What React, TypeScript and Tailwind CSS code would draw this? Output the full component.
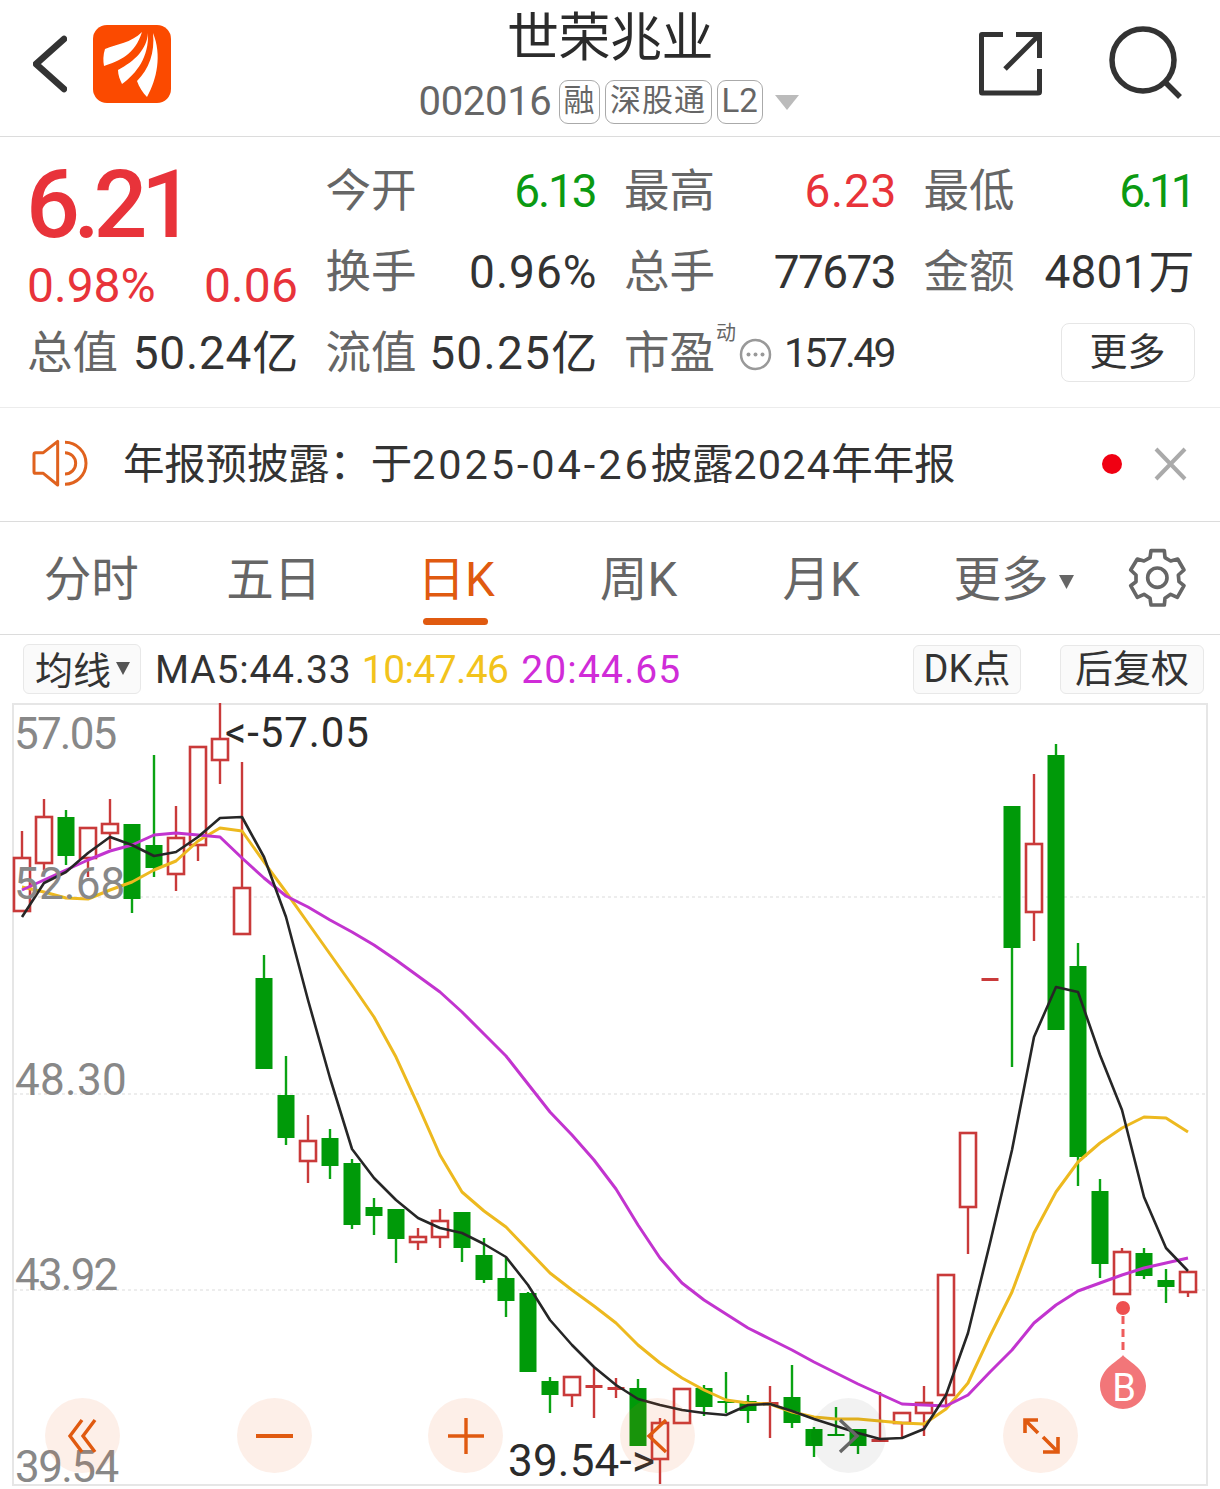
import React from "react";

type C = ["r" | "g", number, number, number, number];
// type, high, low, bodyTop, bodyBottom
const candles: C[] = [
  ["r", 831, 911, 858, 911], ["r", 799, 870, 817, 863], ["g", 810, 865, 817, 856], ["r", 827, 877, 828, 858],
  ["r", 799, 849, 824, 833], ["g", 824, 913, 824, 899], ["g", 755, 877, 845, 868], ["r", 806, 891, 838, 874],
  ["r", 747, 861, 747, 845], ["r", 703, 784, 739, 760], ["r", 762, 934, 888, 934], ["g", 955, 1069, 978, 1069],
  ["g", 1056, 1145, 1095, 1138], ["r", 1115, 1183, 1141, 1161], ["g", 1129, 1179, 1138, 1166], ["g", 1159, 1229, 1163, 1225],
  ["g", 1198, 1235, 1207, 1216], ["g", 1209, 1263, 1209, 1239], ["r", 1228, 1250, 1237, 1242], ["r", 1209, 1248, 1221, 1237],
  ["g", 1212, 1262, 1212, 1248], ["g", 1238, 1283, 1255, 1280], ["g", 1258, 1317, 1278, 1301], ["g", 1292, 1372, 1293, 1372],
  ["g", 1377, 1413, 1381, 1395], ["r", 1377, 1407, 1377, 1395], ["r", 1368, 1418, 1385, 1386], ["r", 1378, 1398, 1387, 1388],
  ["g", 1379, 1446, 1388, 1446], ["r", 1418, 1484, 1423, 1459], ["r", 1388, 1423, 1389, 1423], ["g", 1385, 1416, 1388, 1407],
  ["g", 1372, 1413, 1401, 1403], ["g", 1395, 1423, 1401, 1411], ["r", 1386, 1438, 1402, 1403], ["g", 1365, 1428, 1397, 1423],
  ["g", 1427, 1457, 1429, 1446], ["g", 1407, 1436, 1434, 1436], ["g", 1429, 1454, 1429, 1446], ["r", 1392, 1442, 1439, 1440],
  ["r", 1413, 1437, 1413, 1423], ["r", 1386, 1436, 1403, 1413], ["r", 1275, 1405, 1275, 1395], ["r", 1133, 1254, 1133, 1207],
  ["r", 978, 979, 978, 979], ["g", 806, 1067, 806, 948], ["r", 774, 941, 844, 912], ["g", 744, 1030, 755, 1030],
  ["g", 943, 1186, 966, 1157], ["g", 1179, 1278, 1191, 1264], ["r", 1248, 1294, 1252, 1294], ["g", 1248, 1279, 1253, 1276],
  ["g", 1269, 1303, 1280, 1287], ["r", 1272, 1297, 1272, 1292],
];

const ma5 = [917, 883, 872, 853, 837, 845, 856, 852, 837, 818, 817, 857, 917, 1000, 1078, 1149, 1178, 1200, 1218, 1228, 1233, 1244, 1257, 1285, 1320, 1345, 1367, 1385, 1399, 1405, 1410, 1413, 1415, 1405, 1404, 1411, 1419, 1426, 1433, 1439, 1438, 1429, 1395, 1333, 1243, 1150, 1037, 987, 992, 1055, 1110, 1197, 1248, 1271];
const ma10 = [887, 892, 898, 899, 890, 882, 870, 861, 841, 828, 831, 862, 892, 923, 954, 985, 1017, 1057, 1105, 1155, 1192, 1211, 1227, 1250, 1273, 1290, 1306, 1323, 1345, 1363, 1378, 1390, 1400, 1403, 1404, 1412, 1417, 1419, 1419, 1421, 1423, 1424, 1409, 1383, 1336, 1292, 1233, 1192, 1162, 1143, 1128, 1117, 1118, 1132];
const ma20 = [890, 880, 870, 860, 851, 845, 835, 833, 835, 837, 858, 878, 896, 907, 920, 932, 945, 960, 976, 992, 1012, 1034, 1056, 1084, 1112, 1135, 1160, 1189, 1225, 1258, 1283, 1300, 1314, 1328, 1339, 1350, 1362, 1373, 1384, 1394, 1404, 1405, 1406, 1395, 1372, 1350, 1323, 1305, 1291, 1283, 1275, 1268, 1263, 1258];

const pts = (a: number[]) => a.map((y, i) => `${22 + 22 * i},${y}`).join(" ");

function Candle({ c, i }: { c: C; i: number }) {
  const [t, h, l, top, bot] = c;
  const x = 22 + 22 * i;
  if (t === "g") {
    return (
      <g>
        <line x1={x} x2={x} y1={h} y2={l} stroke="#0aa313" strokeWidth="2.4" />
        <rect x={x - 8.5} y={top} width="17" height={Math.max(bot - top, 2)} fill="#009a09" />
      </g>
    );
  }
  const flat = bot - top < 3;
  return (
    <g>
      <line x1={x} x2={x} y1={h} y2={l} stroke="#c93a3a" strokeWidth="2.4" />
      {flat ? (
        <rect x={x - 8.5} y={top} width="17" height="3" fill="#c93a3a" />
      ) : (
        <rect x={x - 8} y={top} width="16" height={bot - top} fill="#fff" stroke="#c93a3a" strokeWidth="2.6" />
      )}
    </g>
  );
}

function Stat({ label, value, cls }: { label: string; value: string; cls: string }) {
  return (
    <div className="flex items-center justify-between whitespace-nowrap">
      <span className="mt-[3px] text-[45.5px] leading-none text-[#666]">{label}</span>
      <span className={`text-[46px] leading-none ${cls}`}>{value}</span>
    </div>
  );
}

function Axis({ children, top, left, cls }: { children: string; top: string; left: string; cls: string }) {
  return <span className={`absolute leading-none ${top} ${left} ${cls}`}>{children}</span>;
}

export default function App() {
  return (
    <div className="w-[1220px] h-[1489px] bg-white font-['Roboto','Noto_Sans_CJK_SC',sans-serif] overflow-hidden">
      {/* header */}
      <header className="relative h-[137px] border-b border-[#dcdcdc] flex flex-col items-center">
        <div className="absolute left-[33px] top-[25px] flex items-center">
          <svg width="34" height="78" viewBox="0 0 34 78">
            <path d="M31 14 L3 39 L31 64" fill="none" stroke="#333" strokeWidth="6.4" strokeLinecap="round" strokeLinejoin="round" />
          </svg>
          <svg width="78" height="78" viewBox="0 0 78 78" className="ml-[26px]">
            <rect width="78" height="78" rx="14" fill="#fb4a00" />
            <path d="M49 7 C38 18 24 19 12 24 C10 30 10 36 11 41 C26 36 42 30 49 7Z" fill="#fff" />
            <path d="M55 8 C54 24 42 36 25 45 C25 50 27 55 29 59 C44 48 56 32 55 8Z" fill="#fff" />
            <path d="M60 8 C62 28 56 44 44 56 C46 62 50 68 54 72 C64 54 69 30 60 8Z" fill="#fff" />
          </svg>
        </div>
        <div className="mt-[12px] text-[52px] leading-[54px] text-[#2b2b2b] tracking-[-0.5px]">世荣兆业</div>
        <div className="mt-[14px] ml-[-3px] flex items-center text-[#666]">
          <span className="text-[40px] leading-none tracking-[-0.3px]">002016</span>
          <span className="ml-[7px] h-[44px] w-[41px] rounded-[9px] border-[1.5px] border-[#aaa] text-[31px] leading-[40px] text-center">融</span>
          <span className="ml-[5px] h-[44px] w-[107px] rounded-[9px] border-[1.5px] border-[#aaa] text-[31px] leading-[40px] text-center tracking-[1px]">深股通</span>
          <span className="ml-[5px] h-[44px] w-[46px] rounded-[9px] border-[1.5px] border-[#aaa] text-[33px] leading-[40px] text-center">L2</span>
          <svg width="24" height="15" viewBox="0 0 24 15" className="ml-[12px]"><path d="M0 0H24L12 15Z" fill="#bbb" /></svg>
        </div>
        <svg className="absolute left-[977px] top-[30px]" width="68" height="68" viewBox="0 0 68 68" fill="none" stroke="#333" strokeWidth="5">
          <path d="M26 4.5 H5 Q4.5 4.5 4.5 5 V62 Q4.5 63 5 63 H61 Q62.5 63 62.5 62 V39" />
          <path d="M39 4.5 H62.5 V28" />
          <path d="M61 6 L28 39" />
        </svg>
        <svg className="absolute left-[1106px] top-[23px]" width="80" height="80" viewBox="0 0 80 80" fill="none" stroke="#333" strokeWidth="5.5">
          <circle cx="37" cy="37" r="31" />
          <path d="M59 59 L74 74" />
        </svg>
      </header>

      {/* stats */}
      <section className="h-[271px] border-b border-[#ececec] pl-[27px] pt-[13px] grid grid-cols-[269px_269px_270px_269px] grid-rows-[81px_81px_81px] gap-x-[29.5px]">
        <div className="row-span-2 flex flex-col">
          <div className="mt-[3px] ml-[-1px] text-[95px] leading-[104px] font-medium tracking-[-6.5px] text-[#e8333a]">6.21</div>
          <div className="mt-[5px] flex justify-between text-[48px] leading-none text-[#e8333a]">
            <span>0.98%</span>
            <span className="mr-[-2px] tracking-[0.1px]">0.06</span>
          </div>
        </div>
        <Stat label="今开" value="6.13" cls="mr-[-1px] text-[#0b9a12] tracking-[-2.1px]" />
        <Stat label="最高" value="6.23" cls="mr-[-3px] text-[#e8333a] tracking-[0.7px]" />
        <Stat label="最低" value="6.11" cls="text-[#0b9a12] tracking-[-4.1px]" />
        <Stat label="换手" value="0.96%" cls="mr-[-3px] text-[#333] tracking-[1px]" />
        <Stat label="总手" value="77673" cls="mr-[-1px] text-[#333] tracking-[-1.6px]" />
        <Stat label="金额" value="4801万" cls="mr-[-2px] text-[#333] tracking-[0.1px]" />
        <Stat label="总值" value="50.24亿" cls="mr-[-3px] text-[#333] tracking-[0.8px]" />
        <Stat label="流值" value="50.25亿" cls="mr-[-4px] text-[#333] tracking-[1.3px]" />
        <div className="flex items-center whitespace-nowrap">
          <span className="mt-[3px] text-[45.5px] leading-none text-[#666]">市盈</span>
          <div className="relative shrink-0 w-[57px] h-[46px]">
            <span className="absolute -top-[7px] left-[1px] text-[20px] leading-none text-[#666]">动</span>
            <svg className="absolute top-[8px] left-[24px]" width="33" height="33" viewBox="0 0 33 33">
              <circle cx="16.5" cy="16.5" r="14.5" fill="none" stroke="#999" strokeWidth="2.5" />
              <circle cx="9.5" cy="16.5" r="2" fill="#999" /><circle cx="16.5" cy="16.5" r="2" fill="#999" /><circle cx="23.5" cy="16.5" r="2" fill="#999" />
            </svg>
          </div>
          <span className="ml-[12px] mt-[2px] text-[41px] leading-none text-[#333] tracking-[-2.7px]">157.49</span>
        </div>
        <div className="flex items-center justify-end">
          <span className="w-[134px] h-[59px] -mr-[2px] rounded-[8px] border border-[#e6e6e6] text-[38px] leading-[57px] text-center text-[#333]">更多</span>
        </div>
      </section>

      {/* notice */}
      <section className="h-[114px] border-b border-[#dcdcdc] flex items-center relative">
        <svg className="ml-[20px]" width="80" height="70" viewBox="0 0 240 210" fill="none" stroke="#e0621e" strokeWidth="9" strokeLinejoin="round">
          <path d="M47 68 H70 L113 34 V165 L70 130 H47 Q42 130 42 125 V73 Q42 68 47 68Z" />
          <path d="M135 68 A32 32 0 0 1 135 132" />
          <path d="M135 37 A63 63 0 0 1 135 163" />
        </svg>
        <span className="ml-[23px] text-[41.5px] leading-none text-[#333] tracking-[-0.2px]">
          年报预披露：于<span className="tracking-[2.9px]">2025-04-26</span>披露<span className="tracking-[1.2px]">2024</span>年年报
        </span>
        <span className="absolute left-[1102px] top-[46px] w-[20px] h-[20px] rounded-full bg-[#f00012]" />
        <svg className="absolute left-[1154px] top-[39px]" width="33" height="34" viewBox="0 0 33 34" fill="none" stroke="#aaa" strokeWidth="4">
          <path d="M2 2 L31 32 M31 2 L2 32" />
        </svg>
      </section>

      {/* tabs */}
      <nav className="h-[113px] border-b border-[#dcdcdc] flex items-start relative text-[47.5px] leading-none text-[#666]">
        {["分时", "五日", "日K", "周K", "月K"].map((t, i) => (
          <div key={t} className="relative w-[182.5px] h-[112px] flex justify-center items-start pt-[35px]">
            <span className={i === 2 ? "text-[#e05a10]" : ""}>{t}</span>
            {i === 2 && <span className="absolute left-[58px] top-[96px] w-[65px] h-[7px] rounded-full bg-[#e05a10]" />}
          </div>
        ))}
        <div className="flex items-center pt-[35px] ml-[41px]">
          <span>更多</span>
          <svg className="ml-[10px] mt-[2px]" width="15" height="14" viewBox="0 0 15 14"><path d="M0 0H15L7.5 14Z" fill="#666" /></svg>
        </div>
        <svg className="absolute left-[1115px] top-[13px]" width="85" height="85" viewBox="0 0 255 255" fill="none" stroke="#666" strokeWidth="11" strokeLinejoin="round">
          <path d="M108 47 H148 L150 68 L167 78 L188 72 L207 105 L190 120 L192 140 L207 152 L187 187 L167 178 L150 190 L148 210 H108 L105 190 L87 178 L67 187 L47 152 L63 140 L63 120 L47 105 L67 72 L87 78 L105 68 Z" />
          <circle cx="127" cy="128" r="29" />
        </svg>
      </nav>

      {/* MA row */}
      <section className="h-[68px] flex items-center pl-[23px] pr-[16px]">
        <span className="h-[50px] w-[118px] rounded-[6px] border border-[#e8e8e8] bg-[#fafafa] flex items-center pl-[11px] pt-[3px] text-[38px] text-[#333] leading-none">
          均线
          <svg className="ml-[5px] -mt-[4px]" width="14" height="13" viewBox="0 0 14 13"><path d="M0 0H14L7 13Z" fill="#555" /></svg>
        </span>
        <div className="ml-[14px] pt-[3px] flex items-center text-[39px] leading-none">
          <span className="text-[#333] tracking-[0.8px]">MA5:44.33</span>
          <span className="ml-[10.5px] text-[#f2c31c] tracking-[-0.6px]">10:47.46</span>
          <span className="ml-[13px] text-[#d02cd8] tracking-[1.1px]">20:44.65</span>
        </div>
        <span className="ml-auto h-[49px] w-[108px] rounded-[6px] border border-[#e8e8e8] bg-[#fafafa] flex items-center justify-center text-[38px] text-[#333] leading-none">DK点</span>
        <span className="ml-[39px] h-[49px] w-[144px] rounded-[6px] border border-[#e8e8e8] bg-[#fafafa] flex items-center justify-center text-[38px] text-[#333] leading-none">后复权</span>
      </section>

      {/* chart */}
      <section className="relative mx-[12px] w-[1196px] h-[783px] border-2 border-[#e6e6e6]">
        <svg width="1192" height="779" viewBox="14 705 1192 779" className="block overflow-visible">
          {[897, 1094, 1290].map((y) => (
            <line key={y} x1="14" x2="1206" y1={y} y2={y} stroke="#e8e8e8" strokeWidth="1.5" strokeDasharray="3 3" />
          ))}
          {candles.map((c, i) => <Candle key={i} c={c} i={i} />)}
          <polyline points={pts(ma10)} fill="none" stroke="#edb91f" strokeWidth="3" strokeLinejoin="round" />
          <polyline points={pts(ma20)} fill="none" stroke="#c234cf" strokeWidth="3" strokeLinejoin="round" />
          <polyline points={pts(ma5)} fill="none" stroke="#262626" strokeWidth="2.6" strokeLinejoin="round" />
          {/* B marker */}
          <circle cx="1123" cy="1308" r="7" fill="#ee5050" />
          <line x1="1123" x2="1123" y1="1316" y2="1354" stroke="#ee5c5c" strokeWidth="3" strokeDasharray="8 5" />
          <path d="M1123 1355 C1127 1361 1146 1368 1146 1386 A23 23 0 1 1 1100 1386 C1100 1368 1119 1361 1123 1355Z" fill="#f27679" />
        </svg>
        <Axis top="top-[7px]" left="left-[0px]" cls="text-[44px] text-[#888] tracking-[-1.8px]">57.05</Axis>
        <Axis top="top-[157px]" left="left-[0px]" cls="text-[44px] text-[#888] tracking-[0.2px]">52.68</Axis>
        <Axis top="top-[353px]" left="left-[1px]" cls="text-[44px] text-[#888] tracking-[0.3px]">48.30</Axis>
        <Axis top="top-[548px]" left="left-[1px]" cls="text-[44px] text-[#888] tracking-[-1.8px]">43.92</Axis>
        <span className="absolute top-[742px] left-[1px] text-[44px] leading-[40px] text-[#888] tracking-[-1.6px]">39.54</span>
        <Axis top="top-[7px]" left="left-[211px]" cls="text-[42px] text-[#2b2b2b] tracking-[0.9px]">{"<-57.05"}</Axis>
        <Axis top="top-[734px]" left="left-[494px]" cls="text-[44px] text-[#2b2b2b] tracking-[0.2px]">{"39.54->"}</Axis>
        <span className="absolute left-[1098px] top-[664px] w-[24px] text-center text-[38px] leading-none text-white">B</span>

        {/* zoom controls */}
        <div className="absolute left-[31px] top-[693px] w-[75px] h-[75px] rounded-full bg-[#f0641e]/10 flex items-center justify-center">
          <svg width="32" height="36" viewBox="0 0 32 36" fill="none" stroke="#e05a10" strokeWidth="3.4"><path d="M15 2 L3 18 L15 34 M28 2 L16 18 L28 34" /></svg>
        </div>
        <div className="absolute left-[223px] top-[693px] w-[75px] h-[75px] rounded-full bg-[#f0641e]/10 flex items-center justify-center">
          <span className="w-[37px] h-[4px] bg-[#e05a10]" />
        </div>
        <div className="absolute left-[414px] top-[693px] w-[75px] h-[75px] rounded-full bg-[#f0641e]/10 flex items-center justify-center">
          <svg width="36" height="36" viewBox="0 0 36 36" stroke="#e05a10" strokeWidth="3.4"><path d="M0 18 H36 M18 0 V36" /></svg>
        </div>
        <div className="absolute left-[606px] top-[693px] w-[75px] h-[75px] rounded-full bg-[#f0641e]/10 flex items-center justify-center">
          <svg width="24" height="36" viewBox="0 0 24 36" fill="none" stroke="#e05a10" strokeWidth="3.4"><path d="M20 2 L3 18 L20 34" /></svg>
        </div>
        <div className="absolute left-[797px] top-[693px] w-[75px] h-[75px] rounded-full bg-black/5 flex items-center justify-center">
          <svg width="24" height="36" viewBox="0 0 24 36" fill="none" stroke="#666" strokeWidth="3.4"><path d="M3 2 L20 18 L3 34" /></svg>
        </div>
        <div className="absolute left-[989px] top-[693px] w-[75px] h-[75px] rounded-full bg-[#f0641e]/10 flex items-center justify-center">
          <svg width="38" height="38" viewBox="0 0 38 38" fill="none" stroke="#e05a10" strokeWidth="3.6"><path d="M3 16 V3 H16 M3 3 L16 16 M36 20 V35 H21 M36 35 L21 20" /></svg>
        </div>
      </section>
    </div>
  );
}
